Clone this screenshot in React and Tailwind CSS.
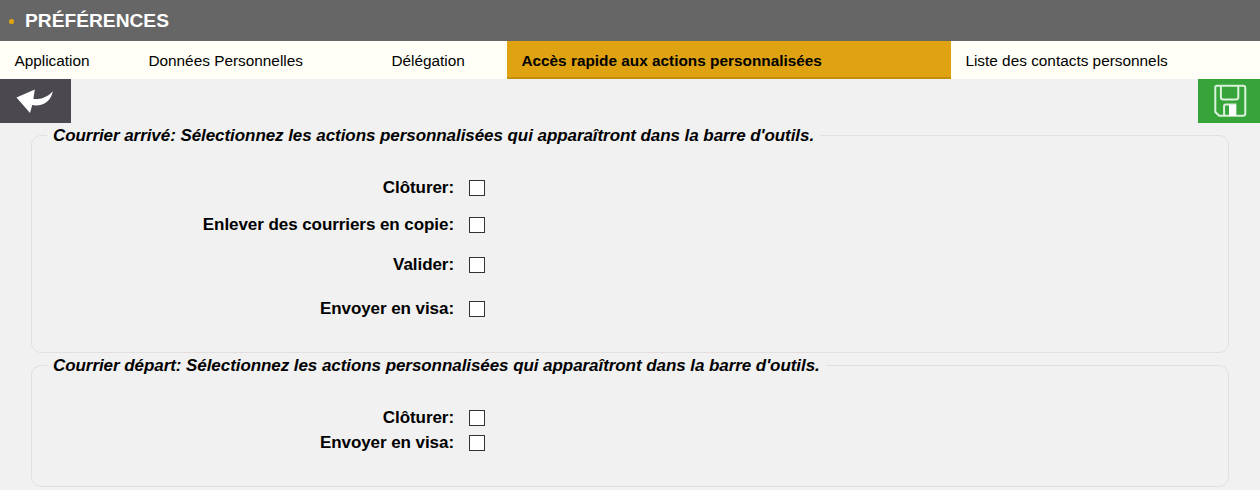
const tabs = [
  { label: "Application", width: "w-[134px]" },
  { label: "Données Personnelles", width: "w-[243px]" },
  { label: "Délégation", width: "w-[130px]" },
  { label: "Accès rapide aux actions personnalisées", width: "w-[444px]", active: true },
  { label: "Liste des contacts personnels", width: "w-[309px]" },
];

function BackIcon() {
  return (
    <svg className="h-11 w-[71px]" viewBox="0 0 71 44" fill="#fff">
      <path d="M16.5 18.6 L34.8 10.4 L33.4 20 C40.5 20.5 47 18.5 52.8 12.2 C51.3 22 43 27.8 32.2 26.1 L30 33.9 Z" />
    </svg>
  );
}

function SaveIcon() {
  return (
    <svg className="h-11 w-[62px]" viewBox="0 0 62 44" fill="none" stroke="#dcf1dc" strokeWidth="2">
      <path d="M19 6.7 H45 Q47.3 6.7 47.3 9 V34.4 Q47.3 36.7 45 36.7 H21.2 L17.3 33 V8.4 Q17.3 6.7 19 6.7 Z" />
      <path d="M22.9 6.7 V18.2 Q22.9 20.5 25.2 20.5 H38 Q40.3 20.5 40.3 18.2 V6.7" />
      <path d="M26.1 36.5 V27 Q26.1 25.4 27.6 25.4 H37.4 V36.5" />
      <path d="M31 26 H38 V37 H31 Z" fill="#fff" stroke="none" />
    </svg>
  );
}

function Option({ label, height }) {
  return (
    <label className={`flex items-start ${height}`}>
      <span className="mt-px w-[422px] text-right text-[17px] leading-5 font-bold tracking-[-0.065px]">{label}</span>
      <input
        type="checkbox"
        className="mt-[3px] ml-[15px] size-4 appearance-none border border-[#333] bg-white"
      />
    </label>
  );
}

function Group({ title, height, children }) {
  return (
    <fieldset className={`mx-[31px] rounded-[10px] border border-[#e3dfdf] ${height}`}>
      <legend className="ml-[15px] h-5 px-[6px] text-[17px] leading-[22px] font-bold tracking-[-0.065px] whitespace-nowrap italic">
        {title}
      </legend>
      {children}
    </fieldset>
  );
}

export default function App() {
  return (
    <div className="h-[490px] w-[1260px] overflow-hidden bg-[#f1f1f1] font-['Liberation_Sans',Arial,sans-serif] text-black">
      <header className="flex h-[41px] items-center bg-[#666] pl-[9px]">
        <span className="mt-[1px] size-[5px] rounded-[2px] bg-[#dfa312]" />
        <h1 className="ml-[11px] text-[19.2px] leading-5 font-bold text-white">PRÉFÉRENCES</h1>
      </header>
      <nav className="flex h-[38px] bg-[#fffff7] text-[15.36px] leading-[22px]">
        {tabs.map((t) => (
          <a
            key={t.label}
            className={`flex h-[38px] shrink-0 items-center border-b-2 pl-[14.4px] whitespace-nowrap ${t.width} ${
              t.active ? "border-[#c48d0c] bg-[#dfa312] font-bold" : "border-transparent"
            }`}
          >
            <span className="mt-1">{t.label}</span>
          </a>
        ))}
      </nav>
      <div className="flex h-[46px] items-start justify-between">
        <button className="h-11 w-[71px] bg-[#4b484f]" aria-label="Retour">
          <BackIcon />
        </button>
        <button className="h-11 w-[62px] bg-[#36a438]" aria-label="Enregistrer">
          <SaveIcon />
        </button>
      </div>
      <Group title="Courrier arrivé: Sélectionnez les actions personnalisées qui apparaîtront dans la barre d'outils." height="h-[228px]">
        <div className="pt-8">
          <Option label="Clôturer:" height="h-[37px]" />
          <Option label="Enlever des courriers en copie:" height="h-[40px]" />
          <Option label="Valider:" height="h-[44px]" />
          <Option label="Envoyer en visa:" height="h-[25px]" />
        </div>
      </Group>
      <div className="h-[2px]" />
      <Group title="Courrier départ: Sélectionnez les actions personnalisées qui apparaîtront dans la barre d'outils." height="h-[132px]">
        <div className="pt-8">
          <Option label="Clôturer:" height="h-[25px]" />
          <Option label="Envoyer en visa:" height="h-[25px]" />
        </div>
      </Group>
    </div>
  );
}
